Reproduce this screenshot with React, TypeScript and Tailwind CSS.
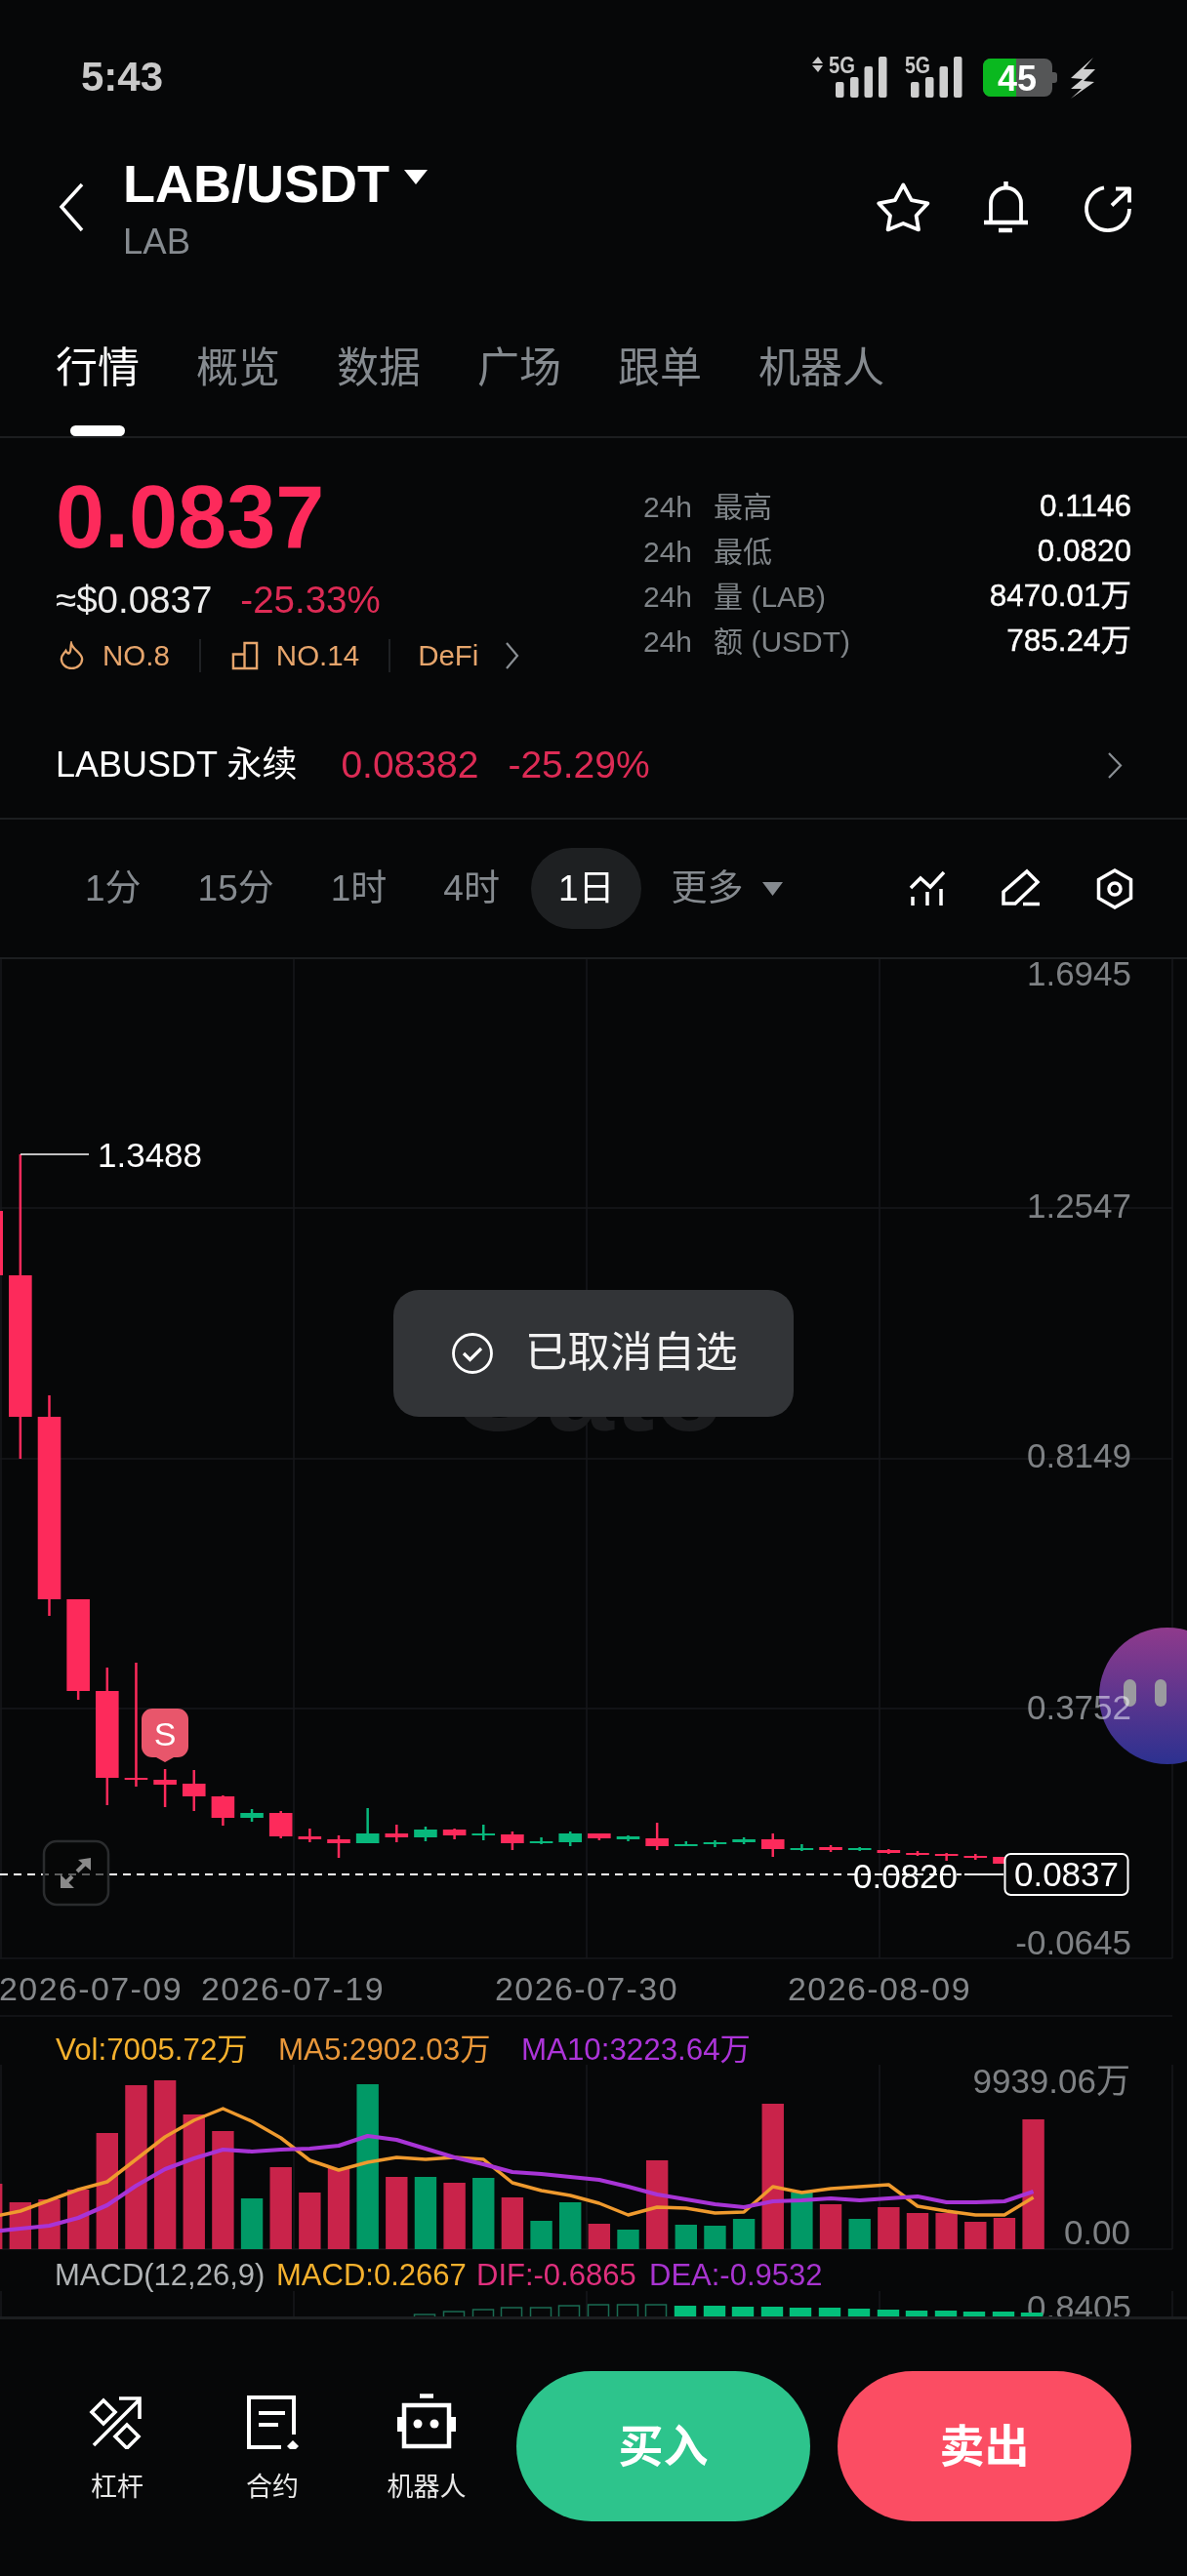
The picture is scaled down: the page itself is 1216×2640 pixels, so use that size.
const RED = "#fd2a5b";
const GREEN = "#08b87c";

// [wickTop, bodyTop, bodyBottom, wickBottom, isGreen]
const candles: [number, number, number, number, boolean][] = [
  [1241, 1241, 1307, 1307, false],
  [1183, 1307, 1452, 1495, false],
  [1430, 1452, 1639, 1656, false],
  [1639, 1639, 1733, 1742, false],
  [1709, 1733, 1822, 1850, false],
  [1704, 1822, 1824, 1831, false],
  [1813, 1824, 1829, 1852, false],
  [1814, 1828, 1841, 1856, false],
  [1840, 1841, 1863, 1871, false],
  [1854, 1858, 1863, 1867, true],
  [1856, 1858, 1882, 1884, false],
  [1874, 1882, 1885, 1888, false],
  [1881, 1885, 1889, 1904, false],
  [1853, 1879, 1889, 1889, true],
  [1870, 1879, 1883, 1888, false],
  [1872, 1875, 1883, 1887, true],
  [1874, 1875, 1881, 1885, false],
  [1870, 1879, 1881, 1886, true],
  [1877, 1880, 1889, 1896, false],
  [1883, 1887, 1889, 1890, true],
  [1877, 1879, 1888, 1892, true],
  [1879, 1879, 1884, 1886, false],
  [1881, 1882, 1885, 1887, true],
  [1868, 1884, 1892, 1896, false],
  [1887, 1890, 1892, 1892, true],
  [1886, 1888, 1890, 1893, true],
  [1883, 1885, 1888, 1890, true],
  [1879, 1885, 1895, 1903, false],
  [1890, 1894, 1895, 1897, true],
  [1891, 1893, 1896, 1898, false],
  [1893, 1894, 1896, 1897, true],
  [1895, 1896, 1899, 1900, false],
  [1897, 1899, 1901, 1902, false],
  [1899, 1900, 1902, 1907, false],
  [1900, 1902, 1903, 1906, false],
  [1903, 1903, 1910, 1910, false],
];

// [top, isGreen]
const volumes: [number, boolean][] = [
  [2238, false], [2257, false], [2254, false], [2244, false], [2186, false], [2137, false], [2132, false],
  [2167, false], [2184, false], [2253, true], [2221, false], [2247, false], [2222, false], [2136, true],
  [2231, false], [2231, true], [2237, false], [2232, true], [2252, false], [2276, true], [2257, true],
  [2279, false], [2285, true], [2214, false], [2280, true], [2281, true], [2274, true], [2156, false],
  [2247, true], [2259, false], [2274, true], [2262, false], [2268, false], [2268, false], [2277, false],
  [2273, false], [2172, false],
];

const ma5 = [2272, 2266, 2255, 2244, 2236, 2213, 2190, 2173, 2161, 2174, 2191, 2214, 2224, 2216, 2211, 2213, 2211, 2213, 2237, 2245, 2250, 2258, 2270, 2262, 2263, 2268, 2267, 2241, 2247, 2243, 2241, 2239, 2261, 2266, 2270, 2270, 2252];
const ma10 = [2287, 2284, 2281, 2273, 2260, 2240, 2223, 2212, 2203, 2205, 2203, 2202, 2199, 2189, 2193, 2202, 2211, 2218, 2226, 2228, 2231, 2234, 2241, 2249, 2254, 2259, 2262, 2256, 2255, 2253, 2255, 2253, 2251, 2257, 2257, 2256, 2246];

const macd: [number, number, boolean][] = [
  [435, 2372, false], [465, 2369, false], [495, 2367, false], [524, 2365, false], [554, 2365, false], [583, 2363, false],
  [613, 2362, false], [643, 2362, false], [672, 2362, false], [702, 2363, true], [732, 2363, true], [761, 2364, true],
  [791, 2364, true], [820, 2365, true], [850, 2365, true], [880, 2366, true], [910, 2367, true], [939, 2368, true],
  [969, 2368, true], [998, 2369, true], [1028, 2369, true], [1057, 2370, true],
];

const candleX = (i: number) => -8.8 + 29.65 * i;
const linePoints = (values: number[]) => values.map((y, i) => `${candleX(i)},${y}`).join(" ");

const stats = [
  ["最高", "0.1146"],
  ["最低", "0.0820"],
  ["量 (LAB)", "8470.01万"],
  ["额 (USDT)", "785.24万"],
];

function StatusBar() {
  return (
    <div className="flex h-[158px] shrink-0 items-center justify-between pl-[83px] pr-[90px]">
      <span className="text-[42px] font-bold leading-none text-[#c9c9c9]">5:43</span>
      <svg className="h-[62px] w-[300px]" viewBox="826 48 300 62">
        <path d="M838 58l5 7h-11zM838 74l5-7h-11z" fill="#c9c9c9" />
        <text x="849" y="75" fontSize="23" fontWeight="700" fill="#c9c9c9" textLength="27" lengthAdjust="spacingAndGlyphs">5G</text>
        <g fill="#cfcfcf">
          <rect x="856" y="84" width="8.5" height="16" rx="2" />
          <rect x="871" y="79" width="8.5" height="21" rx="2" />
          <rect x="885.5" y="68" width="8.5" height="32" rx="2" />
          <rect x="900" y="58" width="8.5" height="42" rx="2" />
          <rect x="933" y="84" width="8.5" height="16" rx="2" />
          <rect x="948" y="79" width="8.5" height="21" rx="2" />
          <rect x="962.5" y="68" width="8.5" height="32" rx="2" />
          <rect x="977" y="58" width="8.5" height="42" rx="2" />
        </g>
        <text x="927" y="75" fontSize="23" fontWeight="700" fill="#c9c9c9" textLength="26" lengthAdjust="spacingAndGlyphs">5G</text>
        <rect x="1007" y="60" width="71" height="39" rx="8" fill="#555657" />
        <path d="M1015 60h26v39h-26a8 8 0 0 1-8-8V68a8 8 0 0 1 8-8z" fill="#0ab81f" />
        <path d="M1078 74h2a3 3 0 0 1 3 3v5a3 3 0 0 1-3 3h-2z" fill="#555657" />
        <text x="1042" y="93" fontSize="36" fontWeight="700" fill="#fff" textAnchor="middle">45</text>
        <path d="M1120 59L1097 80l12 1-12 10 11 0-11 10 24-17-11-1 12-12-12 0z" fill="#cfcfcf" />
      </svg>
    </div>
  );
}

function NavBar() {
  return (
    <div className="flex h-[120px] shrink-0 items-start justify-between">
      <div className="flex">
        <svg className="ml-[60px] mt-[29px] h-[52px] w-[28px]" viewBox="60 187 28 52" fill="none" stroke="#fff" strokeWidth="3.5">
          <path d="M84 189L63 212l21 24" />
        </svg>
        <div className="ml-[38px]">
          <div className="flex h-[60px] items-center text-[54px] font-bold leading-none text-white">
            LAB/USDT
            <svg className="mb-[14px] ml-[15px] h-[15px] w-[24px]" viewBox="0 0 24 15" fill="#fff">
              <path d="M0 0h24L12 15z" />
            </svg>
          </div>
          <div className="flex h-[60px] items-center text-[36.5px] leading-none text-[#858a8f]">LAB</div>
        </div>
      </div>
      <svg className="mr-[57px] mt-[26px] h-[56px] w-[262px]" viewBox="897 184 262 56" fill="none" stroke="#fff" strokeWidth="3.8" strokeLinejoin="round">
        <path d="M925.3 189.5l8.4 15.6 16.7 3.3-11.8 12.6 2.4 14.4-15.7-6.4-15.7 6.4 2.4-14.4-11.8-12.6 16.7-3.3z" />
        <path d="M1015 228v-20a15.5 15.5 0 0 1 31 0v20" />
        <path d="M1008 228h45M1023 236h14M1030.5 186v5" strokeWidth="4.5" />
        <path d="M1131 192.4A22 22 0 1 0 1157 214" />
        <path d="M1143 193.5h14v14M1157 193.5l-18 17" />
      </svg>
    </div>
  );
}

function Tabs() {
  return (
    <div className="flex shrink-0 gap-[58px] border-b-2 border-[#1c1e20] pl-[57px] pt-[69px] text-[43px] leading-[60px] text-[#858a8f]">
      <div className="flex flex-col items-center text-white">
        <span>行情</span>
        <span className="mt-[29px] h-[11px] w-[56px] rounded-full bg-white" />
      </div>
      <span>概览</span>
      <span>数据</span>
      <span>广场</span>
      <span>跟单</span>
      <span>机器人</span>
    </div>
  );
}

function PriceBlock() {
  return (
    <div className="flex h-[281px] shrink-0 justify-between pl-[57px] pr-[57px]">
      <div className="pt-[37px]">
        <div className="text-[90px] font-bold leading-[88px] text-[#fd2a5b]">0.0837</div>
        <div className="mt-[19px] flex gap-[29px] text-[38.5px] leading-[44px]">
          <span className="text-[#ececec]">≈$0.0837</span>
          <span className="text-[#dd2b55]">-25.33%</span>
        </div>
        <div className="mt-[17px] flex h-[36px] items-center text-[29.5px] text-[#e6a56c]">
          <svg className="ml-[4px] h-[30px] w-[25px]" viewBox="60 657 27 31" fill="none" stroke="#e6a56c" strokeWidth="2.5">
            <path d="M73 659c2 7 12 11 12 17a11.5 10.5 0 0 1-23 0c0-4 3-6 5-9 1 2 2 3 3.5 3 2.500-2 1.500-7 2.500-11z" />
          </svg>
          <span className="ml-[19px]">NO.8</span>
          <span className="ml-[30px] mr-[31px] h-[34px] w-[2px] bg-[#1f2124]" />
          <svg className="h-[30px] w-[28px]" viewBox="236 657 29 31" fill="none" stroke="#e6a56c" strokeWidth="2.5">
            <path d="M250 686v-27h13v27zM250 671h-12v15h12" />
          </svg>
          <span className="ml-[18px]">NO.14</span>
          <span className="ml-[30px] mr-[28px] h-[34px] w-[2px] bg-[#1f2124]" />
          <span>DeFi</span>
          <svg className="ml-[28px] h-[28px] w-[14px]" viewBox="0 0 14 28" fill="none" stroke="#8a8f94" strokeWidth="2.2">
            <path d="M1 1l11 13L1 27" />
          </svg>
        </div>
      </div>
      <div className="w-[500px] pt-[47px] text-[30px]">
        {stats.map(([label, value]) => (
          <div key={label} className="flex h-[46px] items-center justify-between">
            <div className="flex gap-[22px] text-[#7f8488]">
              <span>24h</span>
              <span>{label}</span>
            </div>
            <span className="text-[31.5px] text-white [-webkit-text-stroke:0.4px_#fff]">{value}</span>
          </div>
        ))}
      </div>
    </div>
  );
}

function PerpRow() {
  return (
    <div className="flex h-[110px] shrink-0 items-center border-b-2 border-[#1c1e20] pl-[57px] pr-[66px] text-[36px]">
      <span className="text-white">LABUSDT 永续</span>
      <span className="ml-[45px] text-[39px] text-[#dd2b55]">0.08382</span>
      <span className="ml-[30px] text-[39px] text-[#dd2b55]">-25.29%</span>
      <svg className="ml-auto h-[27px] w-[15px]" viewBox="0 0 15 27" fill="none" stroke="#8a8f94" strokeWidth="2.2">
        <path d="M1 1l12 12.500L1 26" />
      </svg>
    </div>
  );
}

function TimeframeRow() {
  return (
    <div className="flex h-[143px] shrink-0 items-center gap-[58px] border-b-2 border-[#1c1e20] pl-[87px] pr-[53px] text-[37px] text-[#858a8f]">
      <span>1分</span>
      <span>15分</span>
      <span>1时</span>
      <span>4时</span>
      <span className="-ml-[26px] -mr-[28px] flex h-[83px] items-center rounded-full bg-[#1e2022] px-[28px] text-white">1日</span>
      <span className="flex items-center gap-[20px]">
        更多
        <svg className="h-[14px] w-[21px]" viewBox="0 0 21 14" fill="#858a8f">
          <path d="M0 0h21L10.500 14z" />
        </svg>
      </span>
      <svg className="ml-auto h-[44px] w-[232px]" viewBox="931 888 232 44" fill="none" stroke="#fff" strokeWidth="3.5">
        <path d="M933 909l10-10 10 9 14-15M935 918v9M950 913v14M964 910v17" />
        <path d="M1052 892l11 11-23 22h-12v-12zM1048 925.500h17" />
        <path d="M1142 891l16.500 9.500v19L1142 929l-16.500-9.500v-19z" />
        <circle cx="1142" cy="910" r="6" />
      </svg>
    </div>
  );
}

function ChartCanvas() {
  return (
    <div className="relative h-[1391px] shrink-0 overflow-hidden">
      <svg className="absolute inset-0 h-[1391px] w-[1216px]" viewBox="0 983 1216 1391">
        <defs>
          <linearGradient id="ball" x1="0" y1="0" x2="0" y2="1">
            <stop offset="0" stopColor="#8f3a8c" />
            <stop offset="1" stopColor="#2c3190" />
          </linearGradient>
        </defs>

        {/* grid */}
        <g stroke="#17191b" strokeWidth="1.5">
          {[1, 301, 601, 901, 1201].map((x) => (
            <g key={x}>
              <line x1={x} x2={x} y1="983" y2="2007" />
              <line x1={x} x2={x} y1="2116" y2="2305" />
              <line x1={x} x2={x} y1="2348" y2="2374" />
            </g>
          ))}
          {[1238, 1495, 1751, 2007, 2066, 2305].map((y) => (
            <line key={y} x1="0" x2="1201" y1={y} y2={y} />
          ))}
        </g>

        <text x="462" y="1466" fontSize="125" fontWeight="700" fill="#1a1b1d">Gate</text>

        <circle cx="1196" cy="1738" r="70" fill="url(#ball)" />
        <rect x="1151" y="1721" width="13" height="28" rx="6.500" fill="#9a9a9f" />
        <rect x="1183" y="1721" width="12" height="28" rx="6" fill="#9a9a9f" />

        {/* candles */}
        {candles.map(([top, bodyTop, bodyBottom, bottom, up], i) => {
          const x = candleX(i);
          const color = up ? GREEN : RED;
          return (
            <g key={i}>
              <line x1={x} x2={x} y1={top} y2={bottom} stroke={color} strokeWidth="2.5" />
              <rect x={x - 11.8} y={bodyTop} width="23.6" height={Math.max(bodyBottom - bodyTop, 2)} fill={color} />
            </g>
          );
        })}

        {/* high marker */}
        <line x1="21" x2="91" y1="1183" y2="1183" stroke="#fff" strokeWidth="1.6" />
        <text x="100" y="1196" fontSize="35" fill="#fff">1.3488</text>

        {/* sell badge */}
        <path d="M156 1751h26a11 11 0 0 1 11 11v28a11 11 0 0 1-11 11h-4l-9 5-9-5h-4a11 11 0 0 1-11-11v-28a11 11 0 0 1 11-11z" fill="#e8566b" />
        <text x="169" y="1789" fontSize="34" fill="#fff" textAnchor="middle">S</text>

        {/* last price line */}
        <line x1="0" x2="985" y1="1921" y2="1921" stroke="#fff" strokeWidth="2" strokeDasharray="8 6" />
        <line x1="988" x2="1028" y1="1921" y2="1921" stroke="#fff" strokeWidth="2" />
        <text x="981" y="1935" fontSize="35" fill="#fff" textAnchor="end">0.0820</text>
        <rect x="1029.500" y="1900" width="126" height="42" rx="6" fill="#060708" stroke="#fff" strokeWidth="2" />
        <text x="1092.500" y="1933" fontSize="35" fill="#fff" textAnchor="middle">0.0837</text>

        {/* fullscreen button */}
        <rect x="45" y="1887" width="66" height="65" rx="13" fill="#060708" fillOpacity="0.65" stroke="#2a2c2e" strokeWidth="2.5" />
        <path d="M93 1904v13l-13-11zM62 1935v-14l14 14z" fill="#8a8a8a" />
        <path d="M88 1909l-9 9M66 1931l8-8" stroke="#8a8a8a" strokeWidth="4" />

        {/* price axis */}
        <g fontSize="35" fill="#7e8184" textAnchor="end">
          <text x="1159" y="1010">1.6945</text>
          <text x="1159" y="1248">1.2547</text>
          <text x="1159" y="1504">0.8149</text>
          <text x="1159" y="1762" className="mix-blend-screen">0.3752</text>
          <text x="1159" y="2003">-0.0645</text>
          <text x="1158" y="2145">9939.06万</text>
          <text x="1158" y="2300">0.00</text>
          <text x="1159" y="2377">0.8405</text>
        </g>

        {/* date axis */}
        <g fontSize="34" fill="#85888b" textAnchor="middle" letterSpacing="1.4">
          <text x="93" y="2050">2026-07-09</text>
          <text x="300" y="2050">2026-07-19</text>
          <text x="601" y="2050">2026-07-30</text>
          <text x="901" y="2050">2026-08-09</text>
        </g>

        {/* volume */}
        <g fontSize="31.300">
          <text x="57" y="2111" fill="#f5b12e">Vol:7005.72万</text>
          <text x="285" y="2111" fill="#e8973a">MA5:2902.03万</text>
          <text x="534" y="2111" fill="#ac34d8">MA10:3223.64万</text>
        </g>
        {volumes.map(([top, up], i) => (
          <rect key={i} x={candleX(i) - 11.2} y={top} width="22.4" height={2305 - top} fill={up ? "#019966" : "#c9234a"} />
        ))}
        <polyline points={linePoints(ma5)} fill="none" stroke="#ef9a2e" strokeWidth="3.5" strokeLinejoin="round" />
        <polyline points={linePoints(ma10)} fill="none" stroke="#a834d6" strokeWidth="4.2" strokeLinejoin="round" />

        {/* macd */}
        <g fontSize="31">
          <text x="56" y="2342" fill="#b0b3b5">MACD(12,26,9)</text>
          <text x="283" y="2342" fill="#f5b12e">MACD:0.2667</text>
          <text x="488" y="2342" fill="#e0307e">DIF:-0.6865</text>
          <text x="665" y="2342" fill="#a834d0">DEA:-0.9532</text>
        </g>
        {macd.map(([x, top, solid]) =>
          solid ? (
            <rect key={x} x={x - 11.2} y={top} width="22.4" height={2374 - top} fill="#03bf7b" />
          ) : (
            <rect key={x} x={x - 10.5} y={top} width="21" height={2376 - top} fill="none" stroke="#1a6b52" strokeWidth="1.5" />
          ),
        )}
      </svg>

      {/* toast */}
      <div className="absolute left-[403px] top-[339px] flex h-[130px] w-[410px] items-center rounded-[26px] bg-[#323437] pl-[59px] text-[43.5px] text-[#f2f2f2]">
        <svg className="h-[44px] w-[44px]" viewBox="0 0 44 44" fill="none" stroke="#fff" strokeWidth="2.8">
          <circle cx="22" cy="22" r="19.500" />
          <path d="M13 22l6.500 6.500L31 17" strokeWidth="3.2" />
        </svg>
        <span className="ml-[32px]">已取消自选</span>
      </div>
    </div>
  );
}

function BottomBar() {
  return (
    <div className="flex flex-1 items-start border-t-[3px] border-[#1c1e20] pl-[66px] pt-[53px]">
      <div className="flex gap-[51px] pt-[20px] text-[27px] leading-[36px] text-[#e8e8e8]">
        <div className="flex w-[108px] flex-col items-center">
          <svg className="h-[60px] w-[108px]" viewBox="66 2450 108 60" fill="none" stroke="#fff" strokeWidth="3.6">
            <path d="M106 2460l12 12-12 12-12-12zM130 2485l12 12-12 12-12-12zM96 2506l47-47M122 2458h21v21" />
          </svg>
          <span className="mt-[21px]">杠杆</span>
        </div>
        <div className="flex w-[108px] flex-col items-center">
          <svg className="h-[60px] w-[108px]" viewBox="225 2450 108 60" fill="none" stroke="#fff" strokeWidth="4">
            <path d="M301 2495v-38h-46v51h33M265 2473h27M265 2485h20" />
            <path d="M300 2501l6 6-6 6-6-6z" fill="#fff" stroke="none" />
          </svg>
          <span className="mt-[21px]">合约</span>
        </div>
        <div className="-ml-[1px] flex w-[108px] flex-col items-center">
          <svg className="h-[60px] w-[108px]" viewBox="383 2450 108 60" fill="none" stroke="#fff" strokeWidth="4.5">
            <rect x="414" y="2465" width="46" height="42" />
            <path d="M430 2455.500h14" />
            <path d="M407 2477h5v15h-5zM462 2477h5v15h-5z" fill="#fff" stroke="none" />
            <circle cx="428" cy="2484" r="4.500" fill="#fff" stroke="none" />
            <circle cx="445" cy="2484" r="4.500" fill="#fff" stroke="none" />
          </svg>
          <span className="mt-[21px]">机器人</span>
        </div>
      </div>
      <div className="ml-[38px] flex gap-[28px] text-[46px] font-bold text-white">
        <button className="flex h-[154px] w-[301px] items-center justify-center rounded-full bg-[#2dc48c]" type="button">买入</button>
        <button className="flex h-[154px] w-[301px] items-center justify-center rounded-full bg-[#fb4d63]" type="button">卖出</button>
      </div>
    </div>
  );
}

export default function App() {
  return (
    <div className="flex h-[2640px] w-[1216px] flex-col overflow-hidden bg-[#060708] [font-family:'Liberation_Sans','Noto_Sans_CJK_SC',sans-serif]">
      <StatusBar />
      <NavBar />
      <Tabs />
      <PriceBlock />
      <PerpRow />
      <TimeframeRow />
      <ChartCanvas />
      <BottomBar />
    </div>
  );
}
